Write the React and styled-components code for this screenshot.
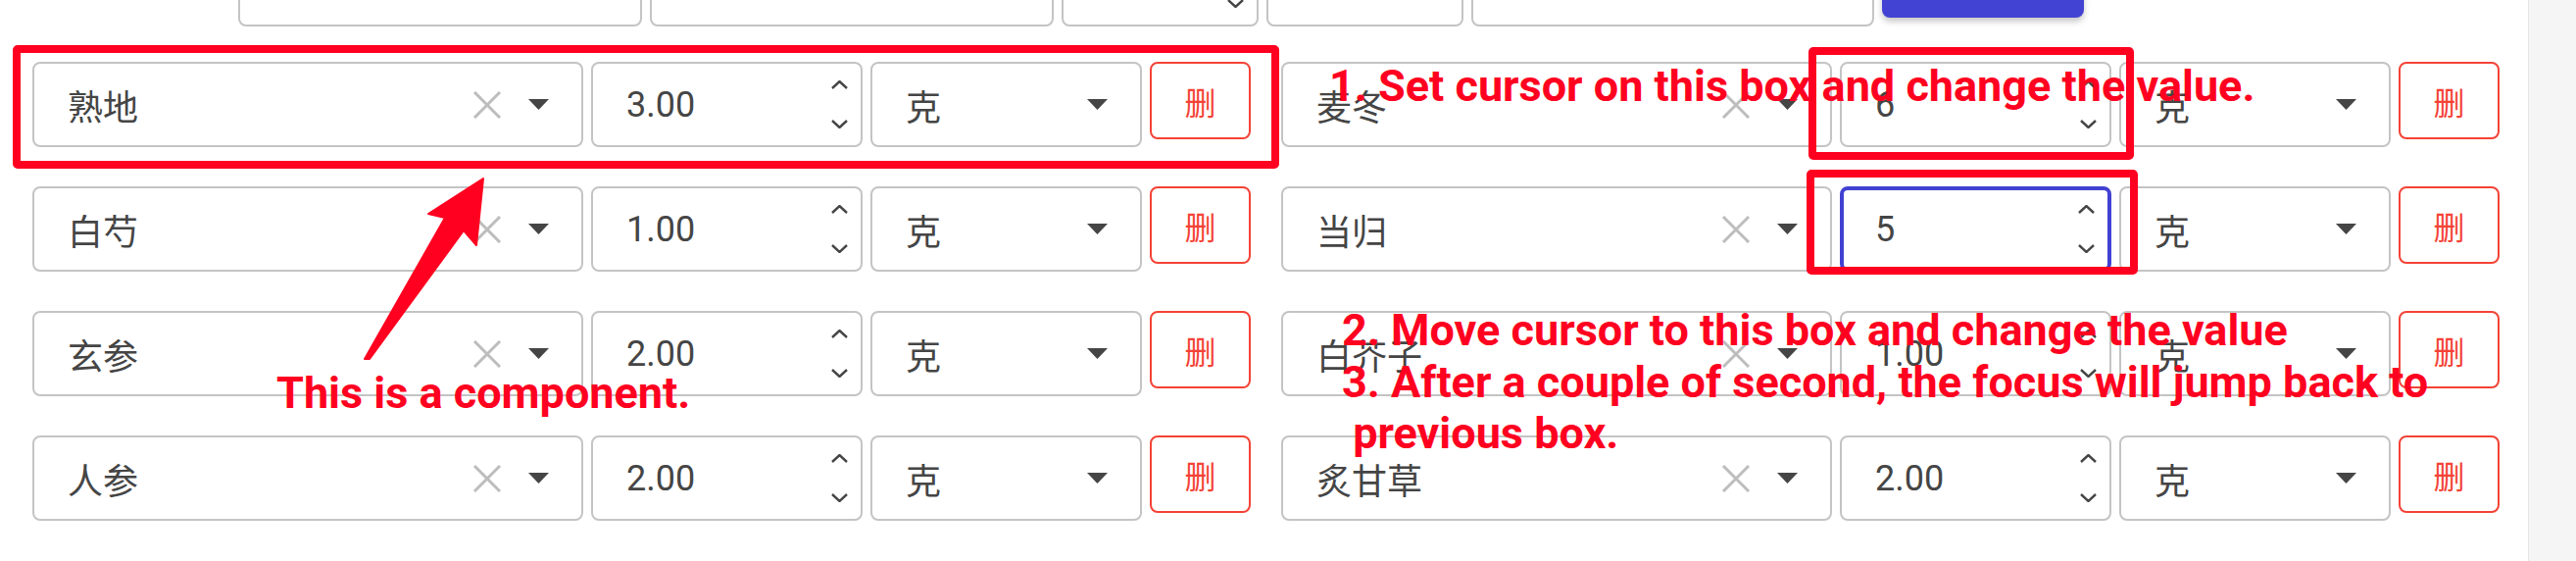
import React from 'react';
import styled, { createGlobalStyle } from 'styled-components';

const GlobalStyle = createGlobalStyle`
  html, body {
    margin: 0;
    padding: 0;
    background: #fff;
  }
  body {
    font-family: Roboto, "Noto Sans CJK SC", sans-serif;
  }
`;

const Page = styled.div`
  display: flex;
  width: 2628px;
  height: 572px;
  overflow: hidden;
`;

const Main = styled.main`
  position: relative;
  flex: 1;
  padding-left: 33px;
`;

const ScrollTrack = styled.div`
  width: 48px;
  background: #f5f5f5;
  border-left: 1px solid #e6e6e6;
`;

const TopRow = styled.div`
  display: flex;
  align-items: flex-start;
  gap: 8px;
  margin: -60px 0 0 210px;
`;

const FormGrid = styled.div`
  display: grid;
  grid-template-columns: 1243px 1243px;
  column-gap: 31px;
  row-gap: 40px;
  margin-top: 36px;
`;

const Row = styled.div`
  display: flex;
  align-items: flex-start;
  gap: 8px;
`;

const Field = styled.div`
  box-sizing: border-box;
  flex-shrink: 0;
  display: flex;
  align-items: center;
  width: ${p => p.$w}px;
  height: 87px;
  padding: 0 ${p => p.$pr ?? 33}px 0 ${p => (p.$focused ? 32 : 34)}px;
  border: ${p => (p.$focused ? '4px solid #4141d2' : '2px solid #c4c4c4')};
  border-radius: 8px;
  background: #fff;
  color: #454545;
  font-size: 36px;
`;

const Value = styled.span`
  flex: 1;
  white-space: nowrap;
`;

const Clear = styled.svg`
  width: 30px;
  height: 28px;
  margin-right: 27px;
`;

const Caret = styled.svg`
  width: 21px;
  height: 11px;
`;

const Spinner = styled.div`
  display: flex;
  flex-direction: column;
  gap: 31px;
`;

const Chevron = styled.svg`
  width: 17px;
  height: 9px;
`;

const DeleteButton = styled.button`
  box-sizing: border-box;
  flex-shrink: 0;
  width: 103px;
  height: 79px;
  border: 2px solid #f44336;
  border-radius: 8px;
  background: #fff;
  color: #f44336;
  font-family: "Noto Sans CJK SC", sans-serif;
  font-size: 32px;
  padding: 0;
`;

const PrimaryButton = styled.button`
  flex-shrink: 0;
  width: 206px;
  height: 78px;
  border: none;
  border-radius: 8px;
  background: #4343d3;
  box-shadow: 0 4px 6px rgba(0, 0, 0, 0.22);
`;

const Overlay = styled.div`
  position: absolute;
  inset: 0;
  pointer-events: none;
`;

const Frame = styled.div`
  position: absolute;
  box-sizing: border-box;
  left: ${p => p.$x}px;
  top: ${p => p.$y}px;
  width: ${p => p.$w}px;
  height: ${p => p.$h}px;
  border: 8px solid #ff0020;
  border-radius: 5px;
`;

const Note = styled.div`
  position: absolute;
  left: ${p => p.$x}px;
  top: ${p => p.$y}px;
  color: #ff0020;
  font-family: Roboto, sans-serif;
  font-weight: 700;
  font-size: 45px;
  line-height: 52.5px;
  white-space: nowrap;
`;

const ArrowSvg = styled.svg`
  position: absolute;
  left: 0;
  top: 0;
  width: 2579px;
  height: 572px;
`;

const ClearIcon = () => (
  <Clear viewBox="0 0 30 28">
    <path d="M2 1 L28 27 M28 1 L2 27" stroke="#bdbdbd" strokeWidth="3" fill="none" />
  </Clear>
);

const CaretIcon = () => (
  <Caret viewBox="0 0 21 11">
    <path d="M0 0 H21 L10.5 11 Z" fill="#454545" />
  </Caret>
);

const SpinnerIcons = () => (
  <Spinner>
    <Chevron viewBox="0 0 17 9">
      <path d="M1 8 L8.5 1 L16 8" stroke="#454545" strokeWidth="2.4" fill="none" />
    </Chevron>
    <Chevron viewBox="0 0 17 9">
      <path d="M1 1 L8.5 8 L16 1" stroke="#454545" strokeWidth="2.4" fill="none" />
    </Chevron>
  </Spinner>
);

const HerbSelect = ({ name }) => (
  <Field $w={562}>
    <Value>{name}</Value>
    <ClearIcon />
    <CaretIcon />
  </Field>
);

const AmountInput = ({ value, focused, width = 277 }) => (
  <Field $w={width} $pr={13} $focused={focused}>
    <Value>{value}</Value>
    <SpinnerIcons />
  </Field>
);

const UnitSelect = ({ unit }) => (
  <Field $w={277}>
    <Value>{unit}</Value>
    <CaretIcon />
  </Field>
);

const HerbRow = ({ herb }) => (
  <Row>
    <HerbSelect name={herb.name} />
    <AmountInput value={herb.amount} focused={herb.focused} />
    <UnitSelect unit="克" />
    <DeleteButton>删</DeleteButton>
  </Row>
);

const herbs = [
  { name: '熟地', amount: '3.00' },
  { name: '麦冬', amount: '6' },
  { name: '白芍', amount: '1.00' },
  { name: '当归', amount: '5', focused: true },
  { name: '玄参', amount: '2.00' },
  { name: '白芥子', amount: '1.00' },
  { name: '人参', amount: '2.00' },
  { name: '炙甘草', amount: '2.00' },
];

const App = () => (
  <>
    <GlobalStyle />
    <Page>
      <Main>
        <TopRow>
          <Field $w={412} />
          <Field $w={412} />
          <AmountInput value="" width={201} />
          <Field $w={201} />
          <Field $w={411} />
          <PrimaryButton />
        </TopRow>
        <FormGrid>
          {herbs.map(h => (
            <HerbRow key={h.name} herb={h} />
          ))}
        </FormGrid>

        <Overlay>
          <Frame $x={13} $y={46} $w={1292} $h={126} />
          <Frame $x={1845} $y={48} $w={332} $h={115} />
          <Frame $x={1843} $y={173} $w={338} $h={107} />
          <ArrowSvg viewBox="0 0 2579 572">
            <path
              d="M372 366 L454 222 L437 218 L493 182 L486 250 L473 235 L377 366 Z"
              fill="#ff0020"
              stroke="#ff0020"
              strokeWidth="2"
              strokeLinejoin="round"
            />
          </ArrowSvg>
          <Note $x={1356} $y={62}>1. Set cursor on this box and change the value.</Note>
          <Note $x={1369} $y={311}>
            2. Move cursor to this box and change the value
            <br />
            3. After a couple of second, the focus will jump back to
            <br />
            &nbsp;previous box.
          </Note>
          <Note $x={282} $y={375}>This is a component.</Note>
        </Overlay>
      </Main>
      <ScrollTrack />
    </Page>
  </>
);

export default App;
